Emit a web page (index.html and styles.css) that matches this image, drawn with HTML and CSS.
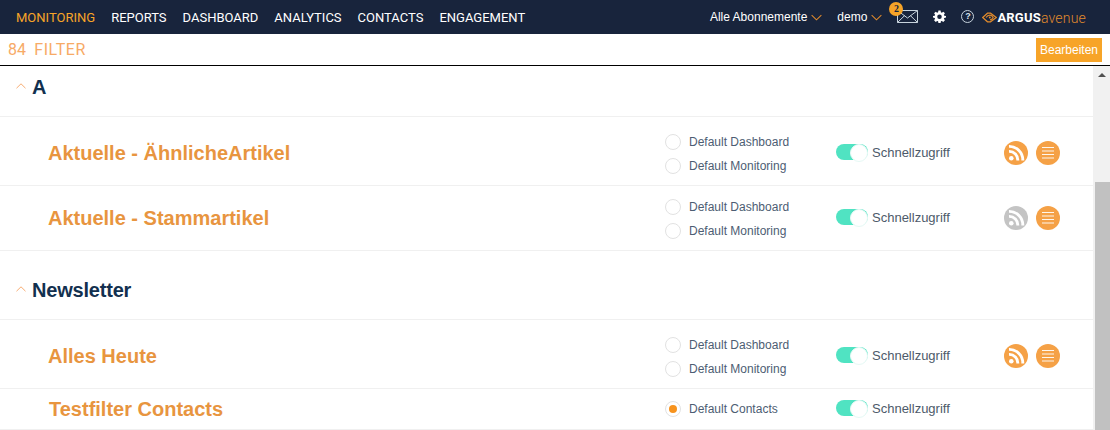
FILE: index.html
```html
<!DOCTYPE html>
<html lang="de">
<head>
<meta charset="utf-8">
<title>Monitoring</title>
<link rel="stylesheet" href="styles.css">
</head>
<body>
<svg class="defs" width="0" height="0" aria-hidden="true">
  <symbol id="rss" viewBox="0 0 24 24">
    <circle cx="7.300" cy="17.200" r="2.300" fill="#fff"/>
    <path d="M5 10.400a8.600 8.600 0 0 1 8.800 9.100M5 5.400a13.600 13.600 0 0 1 13.800 14.100" fill="none" stroke="#fff" stroke-width="2.900"/>
  </symbol>
  <symbol id="menu" viewBox="0 0 24 24">
    <path d="M6 6.500h12M6 10h12M6 13.500h12M6 17h12" fill="none" stroke="#fff" stroke-opacity=".9" stroke-width="1.100"/>
  </symbol>
  <symbol id="up" viewBox="0 0 10 6">
    <path d="M.5 5.200 5 .8l4.500 4.400" fill="none" stroke="#f7ac72" stroke-width="1"/>
  </symbol>
  <symbol id="down" viewBox="0 0 12 7">
    <path d="M.7.8 6 6l5.300-5.200" fill="none" stroke="#e08a2c" stroke-width="1.100"/>
  </symbol>
</svg>

<header class="topbar">
  <nav class="mainnav">
    <a class="navlink active">MONITORING</a>
    <a class="navlink">REPORTS</a>
    <a class="navlink">DASHBOARD</a>
    <a class="navlink">ANALYTICS</a>
    <a class="navlink">CONTACTS</a>
    <a class="navlink">ENGAGEMENT</a>
  </nav>
  <div class="tools">
    <span class="drop subs">Alle Abonnemente <svg class="caret"><use href="#down"/></svg></span>
    <span class="drop user">demo <svg class="caret"><use href="#down"/></svg></span>
    <span class="mail">
      <svg class="mailicon" viewBox="0 0 21 13"><path d="M.5.5h20v12H.5zM.5.500l10 7.500 10-7.500M.5 12.500l7.200-7M20.500 12.500l-7.200-7" fill="none" stroke="#c7d3dd" stroke-width="1"/></svg>
      <span class="badge">2</span>
    </span>
    <svg class="gear" viewBox="0 0 24 24"><path fill="#fff" fill-rule="evenodd" d="M10 1h4l.6 3.200 1.700.7L19 3l3 3-1.900 2.700.7 1.700L24 11v3l-3.200.6-.7 1.700L22 19l-3 3-2.700-1.900-1.700.7L14 24h-4l-.6-3.200-1.700-.7L5 22l-3-3 1.900-2.700-.7-1.700L0 14v-3l3.200-.6.700-1.700L2 6l3-3 2.700 1.900 1.700-.7zM12 8.300a4.200 4.200 0 1 0 0 8.400 4.200 4.200 0 0 0 0-8.400z"/></svg>
    <span class="help">?</span>
    <span class="logo">
      <svg class="eye" viewBox="0 0 15 11"><path d="M.7 5.500 5.500 1.200h3l5.800 4.300-5.800 4.300h-3zM4 5.500c1-1.500 2.500-2.300 4-2.300s2.400.9 3.200 2.300c-.8 1.400-1.900 2.300-3.200 2.300" fill="none" stroke="#e08a2c" stroke-width="1.200"/><circle cx="7.800" cy="5.500" r="1" fill="#e08a2c"/></svg>
      <b class="logoa">ARGUS</b><span class="logob">avenue</span>
    </span>
  </div>
</header>

<div class="filterbar">
  <div class="count"><span>84</span><span class="word">FILTER</span></div>
  <button class="edit">Bearbeiten</button>
</div>

<div class="body">
  <main class="list">
    <section class="head head-a">
      <svg class="chev"><use href="#up"/></svg><h2>A</h2>
    </section>

    <article class="row tall">
      <h3>Aktuelle - ÄhnlicheArtikel</h3>
      <div class="radios">
        <label class="radio"><i></i>Default Dashboard</label>
        <label class="radio"><i></i>Default Monitoring</label>
      </div>
      <div class="quick"><span class="toggle"></span>Schnellzugriff</div>
      <div class="actions">
        <span class="round"><svg><use href="#rss"/></svg></span>
        <span class="round"><svg><use href="#menu"/></svg></span>
      </div>
    </article>

    <article class="row mid">
      <h3>Aktuelle - Stammartikel</h3>
      <div class="radios">
        <label class="radio"><i></i>Default Dashboard</label>
        <label class="radio"><i></i>Default Monitoring</label>
      </div>
      <div class="quick"><span class="toggle"></span>Schnellzugriff</div>
      <div class="actions">
        <span class="round off"><svg><use href="#rss"/></svg></span>
        <span class="round"><svg><use href="#menu"/></svg></span>
      </div>
    </article>

    <section class="head head-n">
      <svg class="chev"><use href="#up"/></svg><h2>Newsletter</h2>
    </section>

    <article class="row tall">
      <h3>Alles Heute</h3>
      <div class="radios">
        <label class="radio"><i></i>Default Dashboard</label>
        <label class="radio"><i></i>Default Monitoring</label>
      </div>
      <div class="quick"><span class="toggle"></span>Schnellzugriff</div>
      <div class="actions">
        <span class="round"><svg><use href="#rss"/></svg></span>
        <span class="round"><svg><use href="#menu"/></svg></span>
      </div>
    </article>

    <article class="row short">
      <h3 class="nudge">Testfilter Contacts</h3>
      <div class="radios">
        <label class="radio on"><i></i>Default Contacts</label>
      </div>
      <div class="quick"><span class="toggle"></span>Schnellzugriff</div>
      <div class="actions"></div>
    </article>
  </main>
  <div class="scrollbar">
    <span class="arrow"></span>
    <span class="thumb"></span>
  </div>
</div>
</body>
</html>
```
FILE: styles.css
```css
* { box-sizing: border-box; }
html, body { margin: 0; height: 430px; overflow: hidden; background: #fff; }
body { font-family: Roboto, "Liberation Sans", sans-serif; }
.defs { position: absolute; }

.topbar { height: 34px; background: #18243c; display: flex; justify-content: space-between; align-items: center; padding: 0 24px 0 16px; color: #fff; font-size: 13px; }
.mainnav { display: flex; gap: 16px; }
.navlink { color: #fff; white-space: nowrap; }
.navlink.active { color: #f7a428; }
.tools { display: flex; align-items: center; }
.drop { display: flex; align-items: center; gap: 4px; font-family: "Liberation Sans", sans-serif; font-size: 12px; white-space: nowrap; }
.caret { width: 11px; height: 7px; }
.subs { margin-right: 15px; }
.user { margin-right: 15px; }
.mail { position: relative; display: block; width: 21px; height: 13px; margin-right: 15px; margin-bottom: 2px; }
.mailicon { display: block; width: 21px; height: 13px; }
.badge { position: absolute; left: -8px; top: -8px; width: 14px; height: 14px; border-radius: 50%; background: #f7a428; color: #18243c; font: bold 10px/14px "Liberation Serif", serif; text-align: center; }
.gear { width: 13px; height: 13px; margin-right: 15px; margin-bottom: 2px; }
.help { width: 13px; height: 13px; border: 1px solid #c7d3dd; border-radius: 50%; font: bold 9px/11px "Liberation Sans", sans-serif; text-align: center; color: #dfe7ee; margin-right: 8px; margin-bottom: 2px; }
.logo { display: flex; align-items: center; margin-top: 1px; }
.eye { width: 15px; height: 11px; margin-right: 0; }
.logoa { font: bold 13px "Roboto", sans-serif; letter-spacing: .2px; color: #fff; }
.logob { font: 300 14px "Roboto", sans-serif; letter-spacing: .2px; color: #e08a2c; }

.filterbar { height: 32px; border-bottom: 1px solid #000; display: flex; justify-content: space-between; align-items: flex-start; padding: 4px 8px 0 8px; }
.count { display: flex; gap: 8px; font-size: 16px; font-weight: 400; color: #f7aa66; letter-spacing: .1px; line-height: 24px; }
.word { letter-spacing: .6px; }
.edit { width: 66px; height: 24px; border: 0; padding: 0; background: #f7a428; color: #fff; font: 12px "Liberation Sans", sans-serif; }

.body { display: flex; height: 364px; overflow: hidden; }
.list { flex: 1; min-width: 0; }
.scrollbar { width: 17px; background: #f1f1f1; display: flex; flex-direction: column; align-items: flex-end; padding-top: 7px; }
.arrow { width: 0; height: 0; border: 4px solid transparent; border-top: 0; border-bottom: 4px solid #505050; margin: 0 4px 105px 0; }
.thumb { width: 15px; height: 260px; background: #c1c1c1; flex: none; }

.head { display: flex; align-items: center; padding-left: 16px; border-bottom: 1px solid #f0f0f0; }
.head h2 { margin: 0 0 0 6px; font: bold 20px "Liberation Sans", sans-serif; color: #12304f; }
.chev { width: 10px; height: 6px; }
.head-a { height: 51px; align-items: flex-start; padding-top: 10px; }
.head-a .chev { margin-top: 7px; }
.head-n { height: 69px; padding-top: 10px; }
.head-n .chev { margin-top: -2px; }
.head-n h2 { letter-spacing: -.2px; }

.row { display: grid; grid-template-columns: 617px 171px 168px 1fr; align-items: center; padding-left: 48px; border-bottom: 1px solid #f0f0f0; }
.tall { height: 69px; padding-top: 4px; }
.mid { height: 65px; }
.short { height: 41px; }
.row h3 { margin: 0; font: bold 20px "Liberation Sans", sans-serif; color: #e8953f; white-space: nowrap; }
.row h3.nudge { margin-left: 1px; }
.radios { display: flex; flex-direction: column; gap: 8px; margin-top: 2px; }
.short .radios { margin-top: 0; }
.radio { display: flex; align-items: center; gap: 8px; height: 16px; font: 12px "Liberation Sans", "Roboto", sans-serif; color: #4d5d73; white-space: nowrap; }
.radio i { width: 16px; height: 16px; border: 1px solid #e2e2e2; border-radius: 50%; background: #fff; position: relative; flex: none; }
.radio.on i::after { content: ""; position: absolute; left: 3px; top: 3px; width: 8px; height: 8px; border-radius: 50%; background: #f7931e; }
.quick { display: flex; align-items: center; gap: 4px; font: 13px "Liberation Sans", sans-serif; color: #4d5a6a; margin-bottom: 2px; }
.toggle { position: relative; width: 32px; height: 16px; border-radius: 8px; background: #50e3c2; flex: none; }
.toggle::after { content: ""; position: absolute; right: 0; top: 0; width: 16px; height: 16px; border-radius: 50%; background: #fff; border: 1px solid #e6f9f5; }
.actions { display: flex; gap: 8px; }
.round { width: 24px; height: 24px; border-radius: 50%; background: #f5a146; display: block; }
.round.off { background: #c4c4c4; }
.round svg { display: block; width: 24px; height: 24px; }
```
